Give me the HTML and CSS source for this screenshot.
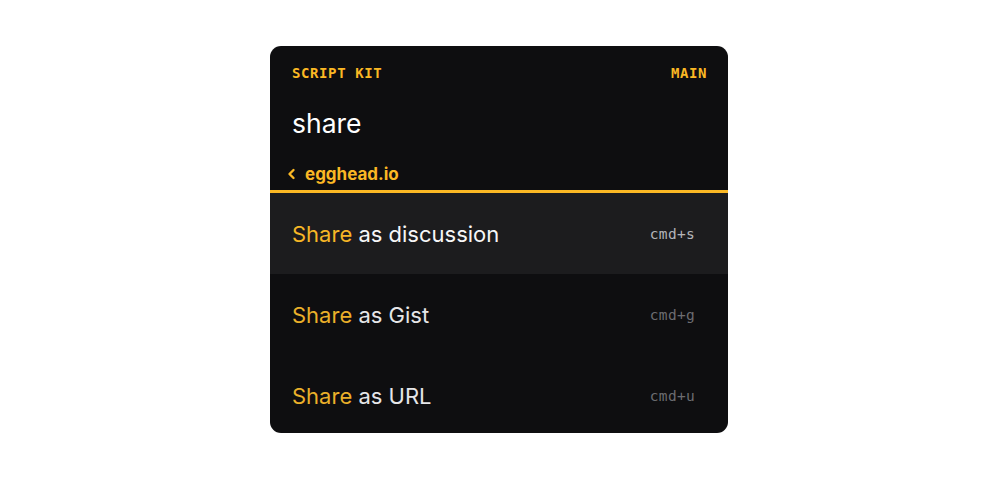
FILE: index.html
```html
<!DOCTYPE html>
<html>
<head>
<meta charset="utf-8">
<link rel="stylesheet" href="styles.css">
</head>
<body>
<div class="stage">
  <div class="card">
    <div class="top">
      <div class="header">
        <span>SCRIPT KIT</span>
        <span>MAIN</span>
      </div>
      <div class="input">share</div>
      <div class="crumb">
        <svg class="chev" width="9" height="12" viewBox="0 0 9 12"><path d="M6.5 2 L2.5 6 L6.5 10" fill="none" stroke="currentColor" stroke-width="2.4" stroke-linecap="round" stroke-linejoin="round"/></svg>
        <span>egghead.io</span>
      </div>
    </div>
    <ul class="list">
      <li class="item selected"><span class="name"><span class="hl">Share</span> as discussion</span><span class="key">cmd+s</span></li>
      <li class="item"><span class="name"><span class="hl">Share</span> as Gist</span><span class="key">cmd+g</span></li>
      <li class="item"><span class="name"><span class="hl">Share</span> as URL</span><span class="key">cmd+u</span></li>
    </ul>
  </div>
</div>
</body>
</html>
```

FILE: styles.css
```css
html, body {
  margin: 0;
  padding: 0;
  background: #ffffff;
}
.stage {
  width: 1000px;
  height: 480px;
  display: flex;
  justify-content: center;
  padding-top: 46px;
  box-sizing: border-box;
}
.card {
  width: 458px;
  height: 387px;
  margin-left: -2px;
  background: #0e0e10;
  border-radius: 11px;
  overflow: hidden;
  font-family: Inter, "Noto Sans", sans-serif;
  display: flex;
  flex-direction: column;
}
.top {
  flex-shrink: 0;
  border-bottom: 3px solid #fbb824;
  padding: 19px 21px 0 22px;
  height: 125px;
  box-sizing: content-box;
  display: flex;
  flex-direction: column;
}
.header {
  display: flex;
  justify-content: space-between;
  font-family: "DejaVu Sans Mono", monospace;
  font-weight: bold;
  font-size: 14px;
  letter-spacing: 0.6px;
  line-height: 16px;
  color: #fbb824;
}
.input {
  margin-top: 26px;
  font-size: 26.5px;
  line-height: 32px;
  color: #ffffff;
}
.crumb {
  margin-top: 25px;
  margin-left: -5px;
  display: flex;
  align-items: center;
  gap: 9px;
  color: #fbb824;
  font-weight: 700;
  font-size: 17px;
  line-height: 20px;
}
.chev {
  display: block;
}
.list {
  list-style: none;
  margin: 0;
  padding: 0;
  flex-shrink: 0;
}
.item {
  height: 81px;
  display: flex;
  align-items: center;
  justify-content: space-between;
  padding: 0 33px 0 22px;
  font-size: 22px;
  color: #e6e6e8;
}
.item.selected {
  background: #1c1c1e;
  color: #f6f6f7;
}
.hl {
  color: #eab02a;
}
.item.selected .hl {
  color: #f6b626;
}
.key {
  font-family: "DejaVu Sans Mono", monospace;
  font-size: 14.5px;
  letter-spacing: 0.3px;
  color: #6c6c70;
}
.item.selected .key {
  color: #b4b4b8;
}
```
